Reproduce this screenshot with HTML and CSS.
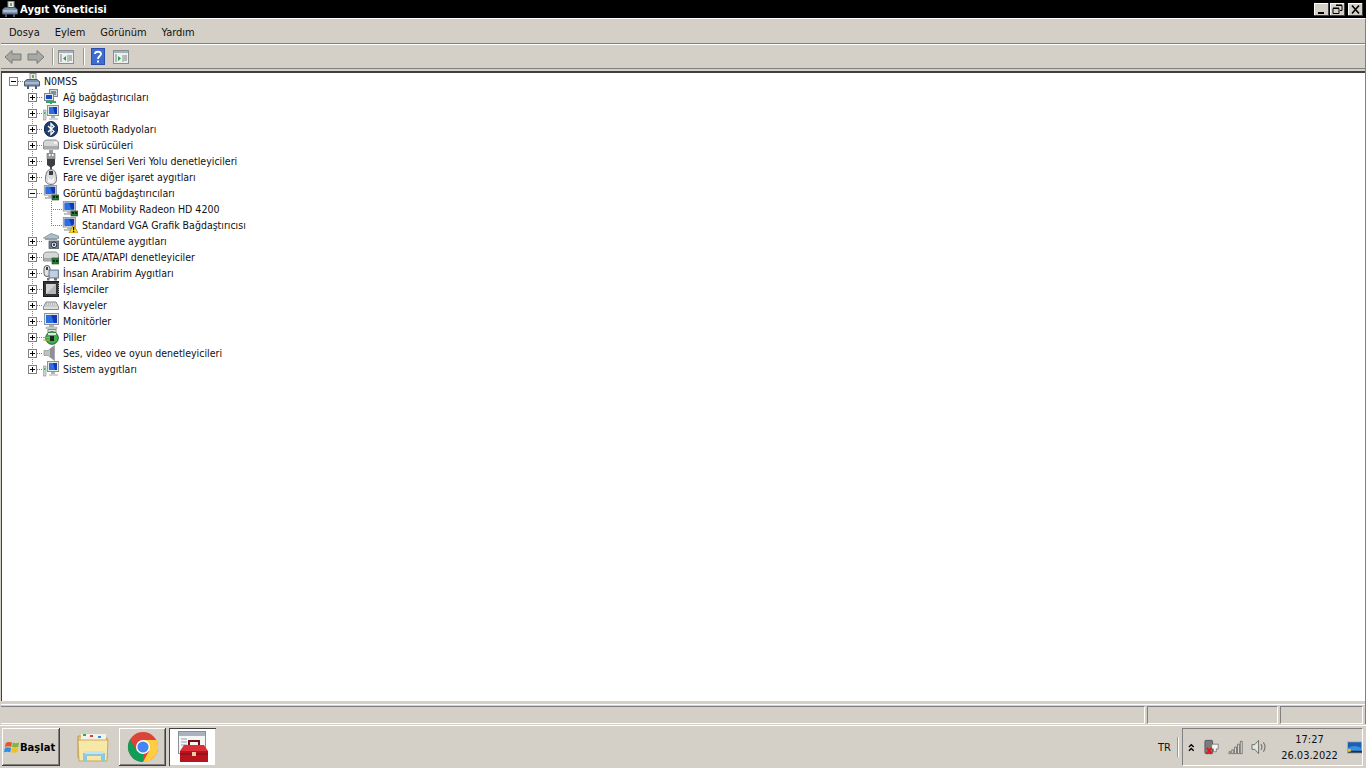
FILE: index.html
```html
<!DOCTYPE html>
<html lang="tr">
<head>
<meta charset="utf-8">
<title>Aygıt Yöneticisi</title>
<link rel="stylesheet" href="styles.css">
</head>
<body>
<svg class="defs" width="0" height="0">
  <defs>
    <symbol id="i-host" viewBox="0 0 16 16">
      <rect x="6" y="0.5" width="6" height="7" fill="#e8e8e4" stroke="#8a8f96"/>
      <rect x="8" y="2" width="2" height="3" fill="#58b058"/>
      <path d="M0.5 8.5L3 6.5H13L15.5 8.5V13H0.5Z" fill="#7e93ad" stroke="#4c5a6c"/>
      <rect x="1" y="9" width="14" height="2" fill="#a9bacd"/>
      <rect x="3" y="13" width="2" height="3" fill="#4c5a6c"/><rect x="11" y="13" width="2" height="3" fill="#4c5a6c"/>
    </symbol>
    <symbol id="i-monitor" viewBox="0 0 16 16">
      <rect x="1.5" y="0.5" width="14" height="11" fill="#e6e6e2" stroke="#8d9298"/>
      <rect x="3" y="2" width="11" height="8" fill="#1238b8"/>
      <path d="M3 2H8L11 10H3Z" fill="#2a6fe6"/>
      <rect x="6" y="12" width="5" height="2" fill="#b0b2b4"/>
      <rect x="3" y="14" width="11" height="2" fill="#d2d4d6" stroke="#92969a" stroke-width=".5"/>
    </symbol>
    <symbol id="i-card" viewBox="0 0 16 16">
      <use href="#i-monitor" width="14" height="14"/>
      <rect x="9" y="10" width="7" height="5" fill="#2f7a3c" stroke="#174a20" stroke-width=".6"/>
      <rect x="10" y="11" width="2" height="2" fill="#0d2a12"/><rect x="13" y="11" width="2" height="2" fill="#0d2a12"/>
    </symbol>
    <symbol id="i-warn" viewBox="0 0 16 16">
      <use href="#i-monitor" width="14" height="14"/>
      <path d="M11.5 7.5L16 16H7Z" fill="#f8d420" stroke="#a08010" stroke-width=".7"/>
      <rect x="11" y="10" width="1.2" height="3.2" fill="#000"/><rect x="11" y="14" width="1.2" height="1.2" fill="#000"/>
    </symbol>
    <symbol id="i-net" viewBox="0 0 16 16">
      <rect x="6.5" y="0.5" width="8" height="7" fill="#d6d8da" stroke="#83878c"/>
      <rect x="8" y="2" width="5" height="4" fill="#7c90a8"/>
      <rect x="1.5" y="4.5" width="9" height="7" fill="#e2e4e6" stroke="#83878c"/>
      <rect x="3" y="6" width="6" height="4" fill="#1c48c8"/>
      <path d="M3 13H13M8 11V15" stroke="#2fa85c" stroke-width="2" fill="none"/>
    </symbol>
    <symbol id="i-pc" viewBox="0 0 16 16">
      <rect x="0.5" y="5" width="2.5" height="10" fill="#d2d4d6" stroke="#8d9298" stroke-width=".6"/>
      <rect x="1" y="7" width="1.5" height="2" fill="#38c060"/>
      <rect x="4.5" y="0.5" width="11" height="10" fill="#e6e6e2" stroke="#8d9298"/>
      <rect x="6" y="2" width="8" height="7" fill="#1238b8"/>
      <path d="M6 2H10L12 9H6Z" fill="#2a6fe6"/>
      <rect x="8" y="11" width="4" height="2" fill="#b0b2b4"/>
      <rect x="6" y="13" width="9" height="2" fill="#d2d4d6"/>
    </symbol>
    <symbol id="i-bt" viewBox="0 0 16 16">
      <rect x="1.5" y="0.5" width="13" height="15" rx="6.5" fill="#1d3f70" stroke="#0e2748"/>
      <path d="M5 5L11 10.5L8 13.5V2.5L11 5.5L5 11" fill="none" stroke="#fff" stroke-width="1.3"/>
    </symbol>
    <symbol id="i-disk" viewBox="0 0 16 16">
      <path d="M0.5 6C0.5 4 2.5 3 5 3H12C14 3 15.5 4.5 15.5 6V12H0.5Z" fill="#d6d8d8" stroke="#8d9298"/>
      <rect x="1" y="9" width="14" height="3" fill="#a8aaae"/>
      <rect x="11" y="5" width="3" height="1.5" fill="#fff"/>
      <path d="M6 13V16H10V13Z" fill="#9a9c9e"/>
    </symbol>
    <symbol id="i-ide" viewBox="0 0 16 16">
      <path d="M0.5 6C0.5 4 2.5 3 5 3H12C14 3 15.5 4.5 15.5 6V12H0.5Z" fill="#d6d8d8" stroke="#8d9298"/>
      <rect x="1" y="9" width="14" height="3" fill="#a8aaae"/>
      <rect x="9" y="9" width="7" height="6" fill="#2f7a3c" stroke="#174a20" stroke-width=".6"/>
      <rect x="10" y="11" width="2" height="2" fill="#0d2a12"/><rect x="13" y="11" width="2" height="2" fill="#0d2a12"/>
    </symbol>
    <symbol id="i-usb" viewBox="0 0 16 16">
      <rect x="4" y="0" width="8" height="6" fill="#9b9da0" stroke="#707275" stroke-width=".6"/>
      <rect x="6" y="1" width="1.5" height="2" fill="#fff"/><rect x="9" y="1" width="1.5" height="2" fill="#fff"/>
      <path d="M4 6H12V12L9 14H7L4 12Z" fill="#3c3e42"/>
      <rect x="7" y="14" width="2" height="2" fill="#55585c"/>
    </symbol>
    <symbol id="i-mouse" viewBox="0 0 16 16">
      <path d="M8 0.5C12 0.5 13 4 13.5 9C14 13 12 15.5 8 15.5C4 15.5 2 13 2.5 9C3 4 4 0.5 8 0.5Z" fill="#d9dbde" stroke="#6e7176"/>
      <rect x="6" y="2" width="4" height="4" fill="#3a3c40"/>
      <path d="M5 8Q8 13 11 8V13Q8 15 5 13Z" fill="#f4f4f4"/>
    </symbol>
    <symbol id="i-cam" viewBox="0 0 16 16">
      <path d="M0.5 5L8 0.5L15.5 3V5.5L8 6.5L0.5 5Z" fill="#a4c2d4" stroke="#6a7c88" stroke-width=".7"/>
      <rect x="2" y="5" width="12" height="2" fill="#9c9ea2"/>
      <rect x="6" y="8" width="10" height="7.5" fill="#6e8090" stroke="#444e58" stroke-width=".7"/>
      <circle cx="11" cy="11.8" r="2.8" fill="#e8eef2" stroke="#2a3038"/>
      <circle cx="11" cy="11.8" r="1.2" fill="#2a3a60"/>
    </symbol>
    <symbol id="i-hid" viewBox="0 0 16 16">
      <rect x="1" y="0.5" width="6" height="11" rx="3" fill="#e0e2e4" stroke="#5c5f63"/>
      <rect x="3" y="2" width="2" height="3" fill="#3a3c40"/>
      <rect x="6" y="5" width="9.5" height="8" fill="#a8c0d8" stroke="#5a6a7a" stroke-width=".8"/>
      <path d="M7.5 7H14M7.5 9H14M7.5 11H14" stroke="#fff" stroke-dasharray="1 1"/>
      <rect x="4" y="13" width="2.5" height="2.5" fill="#707275"/><rect x="11" y="13" width="3" height="2.5" fill="#707275"/>
    </symbol>
    <symbol id="i-cpu" viewBox="0 0 16 16">
      <rect x="0.5" y="0.5" width="15" height="15" fill="#333537" stroke="#1c1c1c"/>
      <rect x="3" y="3" width="10" height="10" fill="#b4b6b8"/>
      <path d="M3 3H13L3 13Z" fill="#d2d4d6"/>
      <path d="M15.5 2V14" stroke="#c8a020" stroke-dasharray="1 1"/>
    </symbol>
    <symbol id="i-kbd" viewBox="0 0 16 16">
      <path d="M0.5 10L3 5H13L15.5 10V12.5H0.5Z" fill="#dcdee0" stroke="#84878b"/>
      <path d="M3 7H13M2.5 9H13.5" stroke="#8d9095" stroke-dasharray="1 1"/>
    </symbol>
    <symbol id="i-bat" viewBox="0 0 16 16">
      <rect x="5" y="0.5" width="8" height="3" fill="#e6e6e2" stroke="#84878b"/>
      <circle cx="9" cy="9" r="6.3" fill="#3eb04e" stroke="#26602e"/>
      <path d="M5 5H13" stroke="#d4ecd8" stroke-width="2"/>
      <path d="M7 7H11V12H7Z" fill="#202224"/>
      <path d="M0 8.5H7M0 11H7" stroke="#c8a020" stroke-width="1.2"/>
    </symbol>
    <symbol id="i-snd" viewBox="0 0 16 16">
      <path d="M1 5.5H5L11.5 0.5V15.5L5 10.5H1Z" fill="#bfc2c4" stroke="#8d9095" stroke-width=".7"/>
      <path d="M7 4V12L11 15V1Z" fill="#8d9095"/>
    </symbol>
  </defs>
</svg>

<div class="titlebar">
  <svg class="ico title-ico"><use href="#i-host"/></svg>
  <span class="title-text">Aygıt Yöneticisi</span>
  <div class="caption-btns">
    <button class="cap"><svg width="15" height="13"><rect x="4" y="9" width="6" height="2" fill="#000"/></svg></button>
    <button class="cap"><svg width="15" height="13"><path d="M6 2.5H12V7.5H10M3 5.5H9V10.5H3Z" fill="none" stroke="#000"/><path d="M6 2H12M3 5H9" stroke="#000" stroke-width="1"/></svg></button>
    <button class="cap cap-close"><svg width="15" height="13"><path d="M4 2.5L11 10.5M11 2.5L4 10.5" stroke="#000" stroke-width="1.6"/></svg></button>
  </div>
</div>

<div class="window">
  <nav class="menubar">
    <span class="menu">Dosya</span><span class="menu">Eylem</span><span class="menu">Görünüm</span><span class="menu">Yardım</span>
  </nav>
  <div class="toolbar">
    <svg class="tool tool-arrow" viewBox="0 0 18 16"><path d="M1 8L8 1.5V5H17V11H8V14.5Z" fill="#a8a8a4" stroke="#7b7b78"/></svg>
    <svg class="tool tool-arrow" viewBox="0 0 18 16"><path d="M17 8L10 1.5V5H1V11H10V14.5Z" fill="#a8a8a4" stroke="#7b7b78"/></svg>
    <span class="tool-sep"></span>
    <svg class="tool tool-pane" viewBox="0 0 16 14"><rect x=".5" y=".5" width="15" height="13" fill="#eef0ee" stroke="#8a9090"/><rect x="1" y="1" width="14" height="2" fill="#a4b0bc"/><path d="M10 5V12" stroke="#8a9090"/><path d="M8 6V11L5 8.5Z" fill="#2fa04a"/><path d="M2 5H4M2 7H4M2 9H4M2 11H4M11 6H14M11 8H14M11 10H14" stroke="#7a8088"/></svg>
    <span class="tool-sep"></span>
    <svg class="tool tool-help" viewBox="0 0 14 17"><rect width="14" height="17" fill="#2a4fb0"/><rect x="1" y="1" width="12" height="15" fill="#3f6cd0"/><path d="M4 6C4 3 10 3 10 6C10 8 7 8 7 11" fill="none" stroke="#fff" stroke-width="1.8"/><rect x="6" y="12.5" width="2" height="2" fill="#fff"/></svg>
    <svg class="tool tool-pane tool-pane2" viewBox="0 0 16 14"><rect x=".5" y=".5" width="15" height="13" fill="#eef0ee" stroke="#8a9090"/><rect x="1" y="1" width="14" height="2" fill="#a4b0bc"/><path d="M10 5V12" stroke="#8a9090"/><path d="M5 6V11L8 8.5Z" fill="#2fa04a"/><path d="M2 5H4M2 7H4M2 9H4M2 11H4M11 6H14M11 8H14M11 10H14" stroke="#7a8088"/></svg>
  </div>

  <ul class="tree">
    <li class="row root"><span class="box"></span><span class="dash"></span><svg class="ico"><use href="#i-host"/></svg><span class="lbl">N0MSS</span></li>
    <li class="row l1"><span class="box plus"></span><span class="dash"></span><svg class="ico"><use href="#i-net"/></svg><span class="lbl">Ağ bağdaştırıcıları</span></li>
    <li class="row l1"><span class="box plus"></span><span class="dash"></span><svg class="ico"><use href="#i-pc"/></svg><span class="lbl">Bilgisayar</span></li>
    <li class="row l1"><span class="box plus"></span><span class="dash"></span><svg class="ico"><use href="#i-bt"/></svg><span class="lbl">Bluetooth Radyoları</span></li>
    <li class="row l1"><span class="box plus"></span><span class="dash"></span><svg class="ico"><use href="#i-disk"/></svg><span class="lbl">Disk sürücüleri</span></li>
    <li class="row l1"><span class="box plus"></span><span class="dash"></span><svg class="ico"><use href="#i-usb"/></svg><span class="lbl">Evrensel Seri Veri Yolu denetleyicileri</span></li>
    <li class="row l1"><span class="box plus"></span><span class="dash"></span><svg class="ico"><use href="#i-mouse"/></svg><span class="lbl">Fare ve diğer işaret aygıtları</span></li>
    <li class="row l1"><span class="box"></span><span class="dash"></span><svg class="ico"><use href="#i-card"/></svg><span class="lbl">Görüntü bağdaştırıcıları</span></li>
    <li class="row l2"><span class="dash2"></span><svg class="ico"><use href="#i-card"/></svg><span class="lbl">ATI Mobility Radeon HD 4200</span></li>
    <li class="row l2 l2-last"><span class="dash2"></span><svg class="ico"><use href="#i-warn"/></svg><span class="lbl">Standard VGA Grafik Bağdaştırıcısı</span></li>
    <li class="row l1"><span class="box plus"></span><span class="dash"></span><svg class="ico"><use href="#i-cam"/></svg><span class="lbl">Görüntüleme aygıtları</span></li>
    <li class="row l1"><span class="box plus"></span><span class="dash"></span><svg class="ico"><use href="#i-ide"/></svg><span class="lbl">IDE ATA/ATAPI denetleyiciler</span></li>
    <li class="row l1"><span class="box plus"></span><span class="dash"></span><svg class="ico"><use href="#i-hid"/></svg><span class="lbl">İnsan Arabirim Aygıtları</span></li>
    <li class="row l1"><span class="box plus"></span><span class="dash"></span><svg class="ico"><use href="#i-cpu"/></svg><span class="lbl">İşlemciler</span></li>
    <li class="row l1"><span class="box plus"></span><span class="dash"></span><svg class="ico"><use href="#i-kbd"/></svg><span class="lbl">Klavyeler</span></li>
    <li class="row l1"><span class="box plus"></span><span class="dash"></span><svg class="ico"><use href="#i-monitor"/></svg><span class="lbl">Monitörler</span></li>
    <li class="row l1"><span class="box plus"></span><span class="dash"></span><svg class="ico"><use href="#i-bat"/></svg><span class="lbl">Piller</span></li>
    <li class="row l1"><span class="box plus"></span><span class="dash"></span><svg class="ico"><use href="#i-snd"/></svg><span class="lbl">Ses, video ve oyun denetleyicileri</span></li>
    <li class="row l1 l1-last"><span class="box plus"></span><span class="dash"></span><svg class="ico"><use href="#i-pc"/></svg><span class="lbl">Sistem aygıtları</span></li>
  </ul>

  <div class="statusbar">
    <span class="pane pane-main"></span><span class="pane pane-mid"></span><span class="pane pane-end"></span>
  </div>
</div>

<footer class="taskbar">
  <button class="start">
    <svg class="start-logo" viewBox="0 0 18 16"><path d="M2 3.5Q5 1.5 9 3L8 8Q5 6.5 1 8Z" fill="#e8542a"/><path d="M10 3Q13 4.5 17 3L16 8Q12.5 9 9 8Z" fill="#7cb83a"/><path d="M1 9Q4 7.5 8 9L7 14Q4 12.5 0 14Z" fill="#2f8fe0"/><path d="M9 9Q12.5 10 16 9L15 14Q11 15 8 14Z" fill="#f4c020"/></svg>
    <span>Başlat</span>
  </button>
  <div class="task task-flat">
    <svg class="task-ico" viewBox="0 0 32 32"><path d="M1 5H13L15 7H30V27H1Z" fill="#e8c878" stroke="#b89a50"/><rect x="4" y="3" width="25" height="6" fill="#f4f2ea"/><rect x="6" y="3" width="3" height="2" fill="#30b030"/><rect x="13" y="4" width="3" height="2" fill="#d84030"/><rect x="21" y="5" width="3" height="2" fill="#3090e0"/><path d="M1 9H31L30 30H2Z" fill="#f8e8a8" stroke="#c8a860"/><path d="M6 22H28V30H24V25H10V30H6Z" fill="#8cc8e0"/><rect x="8" y="20" width="18" height="3" fill="#c0e4f2"/></svg>
  </div>
  <button class="task">
    <svg class="task-ico" viewBox="0 0 32 32"><circle cx="16" cy="16" r="15" fill="#db4437"/><path d="M16 16L3 23.5A15 15 0 0 0 16 31Z" fill="#0f9d58"/><path d="M3 23.5A15 15 0 0 1 3 8.5L10 20Z" fill="#0f9d58"/><path d="M16 9H29.5A15 15 0 0 1 16 31L22 20Z" fill="#ffcd40"/><circle cx="16" cy="16" r="7" fill="#fff"/><circle cx="16" cy="16" r="5.6" fill="#4285f4"/></svg>
  </button>
  <button class="task task-active">
    <svg class="task-ico" viewBox="0 0 32 32"><rect x="1.5" y="0.5" width="27" height="22" fill="#f4f6f6" stroke="#8a9098"/><rect x="2" y="1" width="26" height="4" fill="#a8b2c0"/><path d="M4 8H10M4 11H10M4 14H10" stroke="#9aa0a8"/><path d="M3 20H31V31H3Z" fill="#b8141f"/><path d="M3 20L7 14H27L31 20Z" fill="#dc3038"/><path d="M12 14V10H22V14" fill="none" stroke="#7a0c14" stroke-width="2"/><path d="M3 23H31" stroke="#7a0c14"/><rect x="15" y="21" width="4" height="4" fill="#f0d0a0"/></svg>
  </button>
  <span class="spacer"></span>
  <span class="lang">TR</span>
  <span class="lang-sep"></span>
  <div class="tray">
    <svg class="chev" viewBox="0 0 7 9"><path d="M1 4L3.5 1.5L6 4M1 8L3.5 5.5L6 8" fill="none" stroke="#000" stroke-width="1.4"/></svg>
    <svg class="tray-ico tray-power" viewBox="0 0 16 16"><rect x="1" y="1" width="8" height="14" rx="1" fill="#7a7c7e" stroke="#55575a"/><path d="M8 5H15V10H13V13H10V10H8Z" fill="#f4f4f2" stroke="#6a6c6e" stroke-width=".8"/><path d="M3 9L8 15M8 9L3 15" stroke="#e01818" stroke-width="2"/></svg>
    <svg class="tray-ico" viewBox="0 0 16 16"><path d="M1 13H3V15H1ZM4 11H6V15H4ZM7 8H9V15H7ZM10 5H12V15H10ZM13 2H15V15H13Z" fill="#e4e4e0" stroke="#5c5c58" stroke-width=".8"/></svg>
    <svg class="tray-ico" viewBox="0 0 16 16"><path d="M1 5.5H4L8 1V15L4 10.5H1Z" fill="#e4e4e0" stroke="#6c6c68"/><path d="M10.5 5Q12.5 8 10.5 11M13 3Q16.5 8 13 13" fill="none" stroke="#7c7c78" stroke-width="1.3"/></svg>
    <div class="clock"><span>17:27</span><span>26.03.2022</span></div>
    <svg class="tray-desk" viewBox="0 0 16 13"><rect width="16" height="13" fill="#a8b0b8"/><rect x="1" y="1" width="14" height="9" fill="#1a5fb0"/><path d="M1 7Q8 3 15 7V10H1Z" fill="#3a90e0"/><rect x="1" y="10" width="15" height="2" fill="#203040"/><rect x="1" y="8" width="3" height="3" fill="#f0c020"/></svg>
  </div>
</footer>
</body>
</html>
```
FILE: styles.css
```css
* { box-sizing: border-box; }
html, body { margin: 0; height: 768px; overflow: hidden; }
body {
  display: flex;
  flex-direction: column;
  background: #d4d0c8;
  font-family: "DejaVu Sans", "Liberation Sans", sans-serif;
  font-stretch: condensed;
  font-size: 10.5px;
  color: #111;
}
.defs { position: absolute; }

.titlebar {
  height: 18px;
  flex: none;
  background: #000;
  color: #fff;
  display: flex;
  align-items: center;
  padding: 0 3px 0 2px;
}
.title-ico { margin-right: 2px; }
.title-text { font-weight: bold; font-size: 10px; font-stretch: normal; }
.caption-btns { margin-left: auto; display: flex; gap: 1px; }
.caption-btns .cap-close { margin-left: 2px; }
.cap {
  width: 15px;
  height: 13px;
  padding: 0;
  border: 0;
  background: #d4d0c8;
  box-shadow: inset -1px -1px 0 #404040, inset 1px 1px 0 #fff;
  display: block;
}
.cap svg { display: block; }

.window {
  flex: 1;
  min-height: 0;
  display: flex;
  flex-direction: column;
  padding-left: 1px;
  border-top: 1px solid #fff;
  border-right: 1px solid #808080;
}

.menubar {
  height: 25px;
  flex: none;
  display: flex;
  align-items: center;
  padding: 2px 0 0 8px;
  gap: 15px;
  border-bottom: 1px solid #808080;
  font-size: 11px;
}
.toolbar {
  height: 25px;
  flex: none;
  display: flex;
  align-items: center;
  padding-left: 3px;
  border-top: 1px solid #fff;
  border-bottom: 1px solid #808080;
}
.tool { display: block; flex: none; }
.tool-arrow { width: 18px; height: 16px; margin-right: 5px; }
.tool-sep { width: 2px; height: 17px; background: #9a9892; border-right: 1px solid #fff; margin: 0 4px 0 2px; }
.tool-pane { width: 16px; height: 14px; margin-right: 7px; }
.tool-help { width: 14px; height: 17px; margin: 0 8px 0 2px; }
.tool-pane2 { margin-top: 1px; }

.tree {
  flex: 1;
  min-height: 0;
  margin: 2px 0 1px 0;
  padding: 0;
  list-style: none;
  background: #fff;
  border-top: 2px solid #404040;
  border-left: 1px solid #404040;
}
.row {
  height: 16px;
  display: flex;
  align-items: center;
  white-space: nowrap;
  background-repeat: no-repeat;
}
.root { padding-left: 7px; }
.l1 {
  padding-left: 26px;
  background-image: repeating-linear-gradient(to bottom, #808080 0 1px, transparent 1px 2px);
  background-size: 1px 100%;
  background-position: 30px 0;
}
.l1-last { background-size: 1px 8px; }
.l2 {
  padding-left: 49px;
  background-image:
    repeating-linear-gradient(to bottom, #808080 0 1px, transparent 1px 2px),
    repeating-linear-gradient(to bottom, #808080 0 1px, transparent 1px 2px);
  background-size: 1px 100%, 1px 100%;
  background-position: 30px 0, 49px 0;
}
.l2-last { background-size: 1px 100%, 1px 8px; }
.box {
  width: 9px;
  height: 9px;
  flex: none;
  border: 1px solid #808080;
  background:
    linear-gradient(#000, #000) center / 5px 1px no-repeat,
    #fff;
}
.box.plus {
  background:
    linear-gradient(#000, #000) center / 5px 1px no-repeat,
    linear-gradient(#000, #000) center / 1px 5px no-repeat,
    #fff;
}
.dash, .dash2 {
  height: 1px;
  flex: none;
  background-image: repeating-linear-gradient(to right, #808080 0 1px, transparent 1px 2px);
}
.dash { width: 6px; }
.dash2 { width: 11px; }
.ico { width: 16px; height: 16px; flex: none; display: block; }
.lbl { margin-left: 4px; }

.statusbar {
  height: 21px;
  flex: none;
  margin-top: 2px;
  display: flex;
  gap: 2px;
  padding: 1px 2px 0 0;
  border-top: 1px solid #fff;
  background: #d4d0c8;
}
.pane { height: 18px; border-top: 1px solid #808080; border-left: 1px solid #808080; border-right: 1px solid #fff; border-bottom: 1px solid #fff; }
.pane-main { width: 1145px; border-left: 0; }
.pane-mid { width: 131px; }
.pane-end { width: 83px; }

.taskbar {
  height: 43px;
  flex: none;
  display: flex;
  align-items: center;
  padding: 0 3px 0 2px;
  border-top: 1px solid #fff;
  box-shadow: 0 -1px 0 #d4d0c8;
}
.start {
  width: 58px;
  height: 38px;
  flex: none;
  padding: 0 0 0 2px;
  border: 0;
  display: flex;
  align-items: center;
  gap: 0;
  background: #d4d0c8;
  box-shadow: inset -1px -1px 0 #404040, inset 1px 1px 0 #fff, inset -2px -2px 0 #808080;
  font: bold 10px "DejaVu Sans", sans-serif;
  color: #000;
}
.start-logo { width: 16px; height: 16px; }
.task {
  width: 47px;
  height: 38px;
  flex: none;
  margin-right: 3px;
  padding: 0;
  border: 0;
  display: flex;
  align-items: center;
  justify-content: center;
  background: #d4d0c8;
  box-shadow: inset -1px -1px 0 #404040, inset 1px 1px 0 #fff, inset -2px -2px 0 #808080;
}
.task-flat { box-shadow: none; margin-left: 9px; }
.task-active {
  background: #fff;
  box-shadow: inset 1px 1px 0 #404040, inset -1px -1px 0 #d4d0c8;
}
.task-ico { width: 32px; height: 32px; display: block; }
.spacer { flex: 1; }
.lang { font-size: 11px; margin-right: 6px; }
.lang-sep { width: 2px; height: 20px; background: #9a9892; border-right: 1px solid #fff; margin-right: 3px; }
.tray {
  width: 181px;
  height: 38px;
  flex: none;
  display: flex;
  align-items: center;
  padding-left: 5px;
  border-top: 1px solid #808080;
  border-left: 1px solid #808080;
  border-right: 1px solid #fff;
  border-bottom: 1px solid #fff;
}
.chev { width: 7px; height: 9px; margin-right: 9px; }
.tray-ico { width: 16px; height: 16px; margin-right: 8px; }
.tray-power { margin-right: 9px; }
.clock {
  width: 62px;
  display: flex;
  flex-direction: column;
  align-items: center;
  gap: 3px;
  line-height: 13px;
  margin-left: 6px;
  font-size: 11px;
}
.tray-desk { width: 16px; height: 13px; margin-left: 8px; }
```
